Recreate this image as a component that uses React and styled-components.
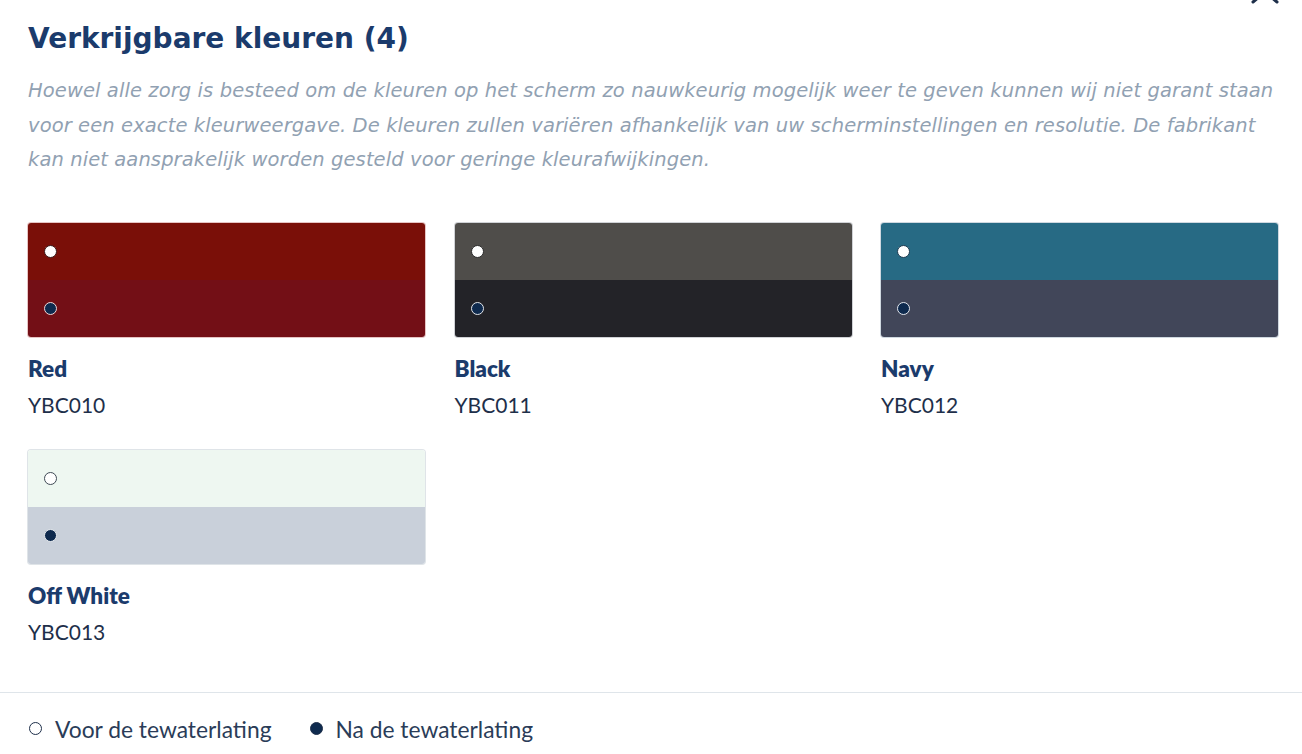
import React from "react";
import styled, { createGlobalStyle } from "styled-components";

const Global = createGlobalStyle`
  html, body { margin: 0; padding: 0; background: #fff; }
  body { font-family: Lato, "Open Sans", sans-serif; overflow: hidden; }
`;

const Page = styled.div`
  position: relative;
  width: 1302px;
  height: 754px;
  overflow: hidden;
  background: #fff;
`;

const Close = styled.svg`
  position: absolute;
  top: -20px;
  right: 23px;
  width: 28px;
  height: 24px;
`;

const Body = styled.section`
  padding: 21px 24px 48px 28px;
`;

const Title = styled.h2`
  margin: 0;
  font-family: "DejaVu Sans", sans-serif;
  font-size: 28px;
  line-height: 36px;
  font-weight: 700;
  color: #1b3b6c;
`;

const Note = styled.p`
  margin: 17px 0 0;
  font-family: "DejaVu Sans", sans-serif;
  font-size: 19.5px;
  line-height: 34.5px;
  font-style: italic;
  letter-spacing: 0.1px;
  color: #91a1b2;
`;

const Grid = styled.div`
  margin-top: 45px;
  display: grid;
  grid-template-columns: repeat(3, 397px);
  column-gap: 29.5px;
  row-gap: 33px;
`;

const Card = styled.div`
  display: flex;
  flex-direction: column;
`;

const Swatch = styled.div`
  height: 114px;
  border-radius: 3px;
  overflow: hidden;
  display: flex;
  flex-direction: column;
  box-shadow: 0 0 0 1px ${(p) => p.$edge};
`;

const Half = styled.div`
  flex: 1;
  background: ${(p) => p.$bg};
  display: flex;
  align-items: center;
  padding-left: 16px;
`;

const Dot = styled.span`
  width: 13px;
  height: 13px;
  border-radius: 50%;
  box-sizing: border-box;
  background: ${(p) => (p.$filled ? "#0e2a4e" : "#fff")};
  border: 1.5px solid ${(p) => p.$ring};
`;

const Name = styled.div`
  margin-top: 20px;
  font-size: 22.5px;
  line-height: 24px;
  font-weight: 800;
  color: #1b3b6c;
`;

const Code = styled.div`
  margin-top: 12px;
  font-size: 21px;
  line-height: 24px;
  color: #1e2f4a;
`;

const Divider = styled.hr`
  margin: 0;
  border: none;
  border-top: 1px solid #dfe5ea;
`;

const Legend = styled.div`
  display: flex;
  align-items: center;
  gap: 38px;
  padding: 18px 28px 0 29px;
  height: 36px;
`;

const LegendItem = styled.div`
  display: flex;
  align-items: center;
  gap: 13px;
  font-size: 22.8px;
  color: #2a3c58;
`;

const LegendDot = styled.span`
  width: 13px;
  height: 13px;
  border-radius: 50%;
  box-sizing: border-box;
  border: 1.5px solid #1e2f4a;
  background: ${(p) => (p.$filled ? "#0e2a4e" : "#fff")};
`;

const colours = [
  { name: "Red", code: "YBC010", top: "#7a0f08", bottom: "#730f16", edge: "#e6c4c4", topRing: "#3a1a1a", botRing: "#f0d8d8" },
  { name: "Black", code: "YBC011", top: "#4f4d4a", bottom: "#232328", edge: "#d0d2d6", topRing: "#2a2a2a", botRing: "#e4e6ea" },
  { name: "Navy", code: "YBC012", top: "#276a84", bottom: "#414659", edge: "#cfd8e0", topRing: "#1e3b50", botRing: "#e4e8ee" },
  { name: "Off White", code: "YBC013", top: "#eef7f1", bottom: "#c9d0da", edge: "#dfe4e8", topRing: "#3f4a55", botRing: "#e8ecf0" },
];

export default function App() {
  return (
    <Page>
      <Global />
      <Close viewBox="0 0 28 24">
        <path d="M2 2 L26 22 M26 2 L2 22" stroke="#1e2f4a" strokeWidth="3" strokeLinecap="round" />
      </Close>
      <Body>
        <Title>Verkrijgbare kleuren (4)</Title>
        <Note>
          Hoewel alle zorg is besteed om de kleuren op het scherm zo nauwkeurig mogelijk weer te geven kunnen wij niet garant staan voor een exacte kleurweergave. De kleuren zullen variëren afhankelijk van uw scherminstellingen en resolutie. De fabrikant kan niet aansprakelijk worden gesteld voor geringe kleurafwijkingen.
        </Note>
        <Grid>
          {colours.map((c) => (
            <Card key={c.code}>
              <Swatch $edge={c.edge}>
                <Half $bg={c.top}>
                  <Dot $ring={c.topRing} />
                </Half>
                <Half $bg={c.bottom}>
                  <Dot $filled $ring={c.botRing} />
                </Half>
              </Swatch>
              <Name>{c.name}</Name>
              <Code>{c.code}</Code>
            </Card>
          ))}
        </Grid>
      </Body>
      <Divider />
      <Legend>
        <LegendItem>
          <LegendDot />
          Voor de tewaterlating
        </LegendItem>
        <LegendItem>
          <LegendDot $filled />
          Na de tewaterlating
        </LegendItem>
      </Legend>
    </Page>
  );
}
